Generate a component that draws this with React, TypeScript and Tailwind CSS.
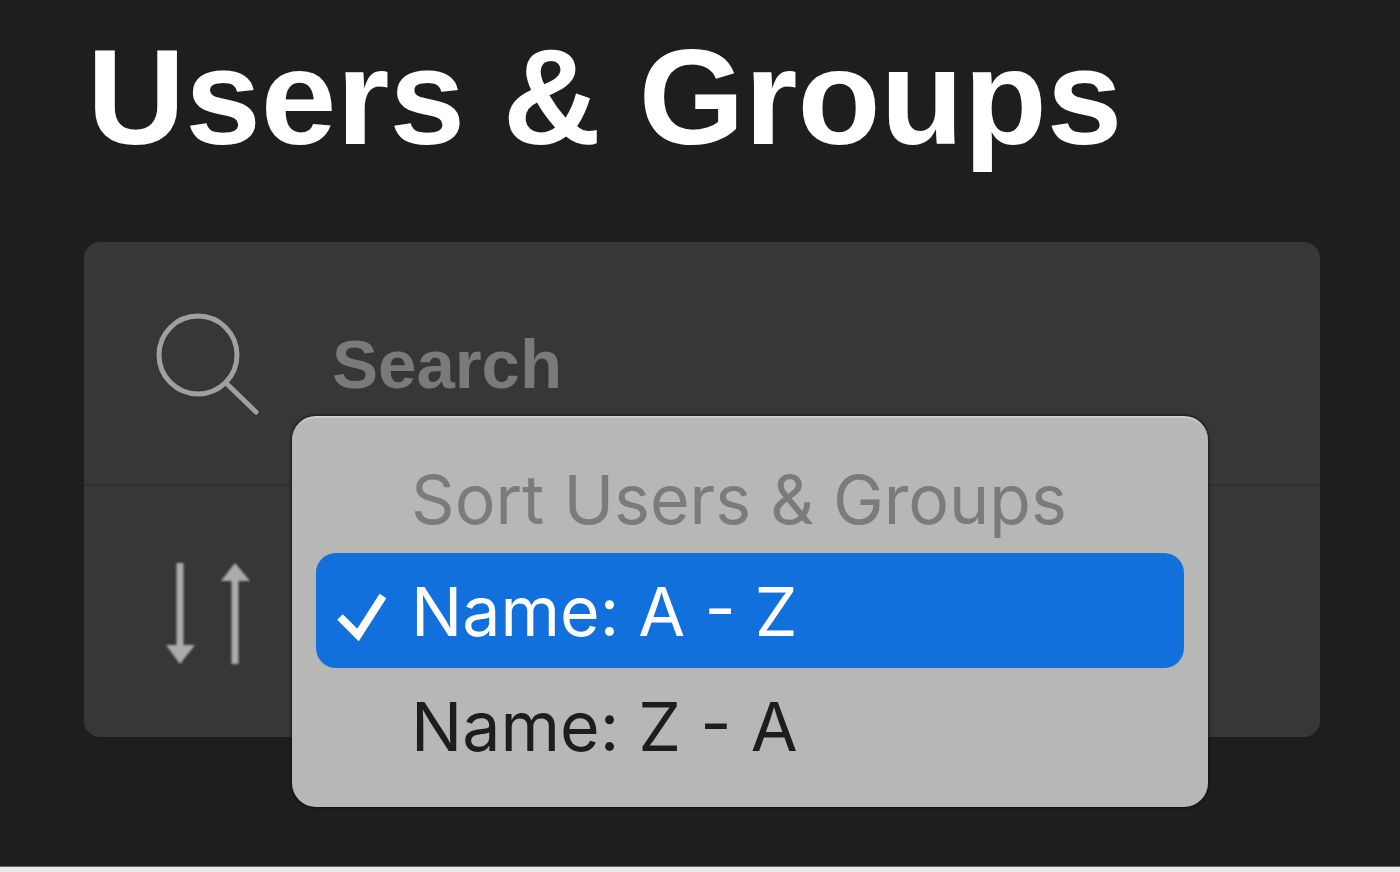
export default function App() {
  return (
    <div className="h-[872px] w-[1400px] flex flex-col bg-[#e8e8e8] overflow-hidden font-['Liberation_Sans',Arial,sans-serif]">
      <div className="h-[867px] bg-[#1e1e1e] pl-[84px] pr-[80px] pt-[20px] border-b border-[#6b6b6b]">
        <h1 className="pl-[3px] text-[136px] leading-[155px] font-bold text-white blur-[0.7px]">Users &amp; Groups</h1>

        <div className="relative mt-[67px] h-[495px] w-[1236px] rounded-[16px] bg-[#373737]">
          <div className="h-[244px] flex items-start border-b-2 border-[#2e2e2e]">
            <svg className="ml-[70px] mt-[68px] shrink-0 blur-[0.6px]" width="106" height="106" viewBox="0 0 106 106" fill="none" stroke="#a0a0a0" strokeWidth="5" strokeLinecap="round">
              <circle cx="44" cy="45" r="39" />
              <path d="M73 74 L102 102" />
            </svg>
            <span className="ml-[72px] mt-[84px] text-[69px] leading-[78px] font-bold text-[#7a7a7a] blur-[0.7px]">Search</span>
          </div>
          <div className="flex items-start">
            <svg className="ml-[78px] mt-[76px] shrink-0 blur-[1px]" width="90" height="104" viewBox="0 0 90 104" fill="#ababab">
              <rect x="14.5" y="1" width="7" height="90" />
              <path d="M4 83 H33 L18 102 Z" />
              <rect x="69.5" y="12" width="7" height="90" />
              <path d="M59 19 H88 L73 1 Z" />
            </svg>
          </div>

          <div className="absolute left-[208px] top-[174px] h-[391px] w-[916px] rounded-[24px] bg-[#b7b7b5] border-t-2 border-t-[#cfcfcd] shadow-[0_0_3px_1px_rgba(0,0,0,0.55)] px-[24px] pt-[42px] font-['Inter',sans-serif]">
            <div className="pl-[95px] text-[68px] leading-[78px] text-[#7b7b7b] blur-[0.7px]">Sort Users &amp; Groups</div>
            <div className="mt-[15px] h-[115px] rounded-[20px] bg-[#1170dc] flex items-center text-white">
              <svg className="ml-[20px] shrink-0 blur-[0.5px]" width="50" height="60" viewBox="0 0 50 60" fill="none" stroke="#ffffff" strokeWidth="8">
                <path d="M4 36 L22 54 L47 15" />
              </svg>
              <span className="ml-[25px] text-[68px] leading-[78px] blur-[0.7px]">Name: A - Z</span>
            </div>
            <div className="mt-[19px] pl-[95px] text-[68px] leading-[78px] text-[#1d1d1d] blur-[0.7px]">Name: Z - A</div>
          </div>
        </div>
      </div>
    </div>
  );
}
